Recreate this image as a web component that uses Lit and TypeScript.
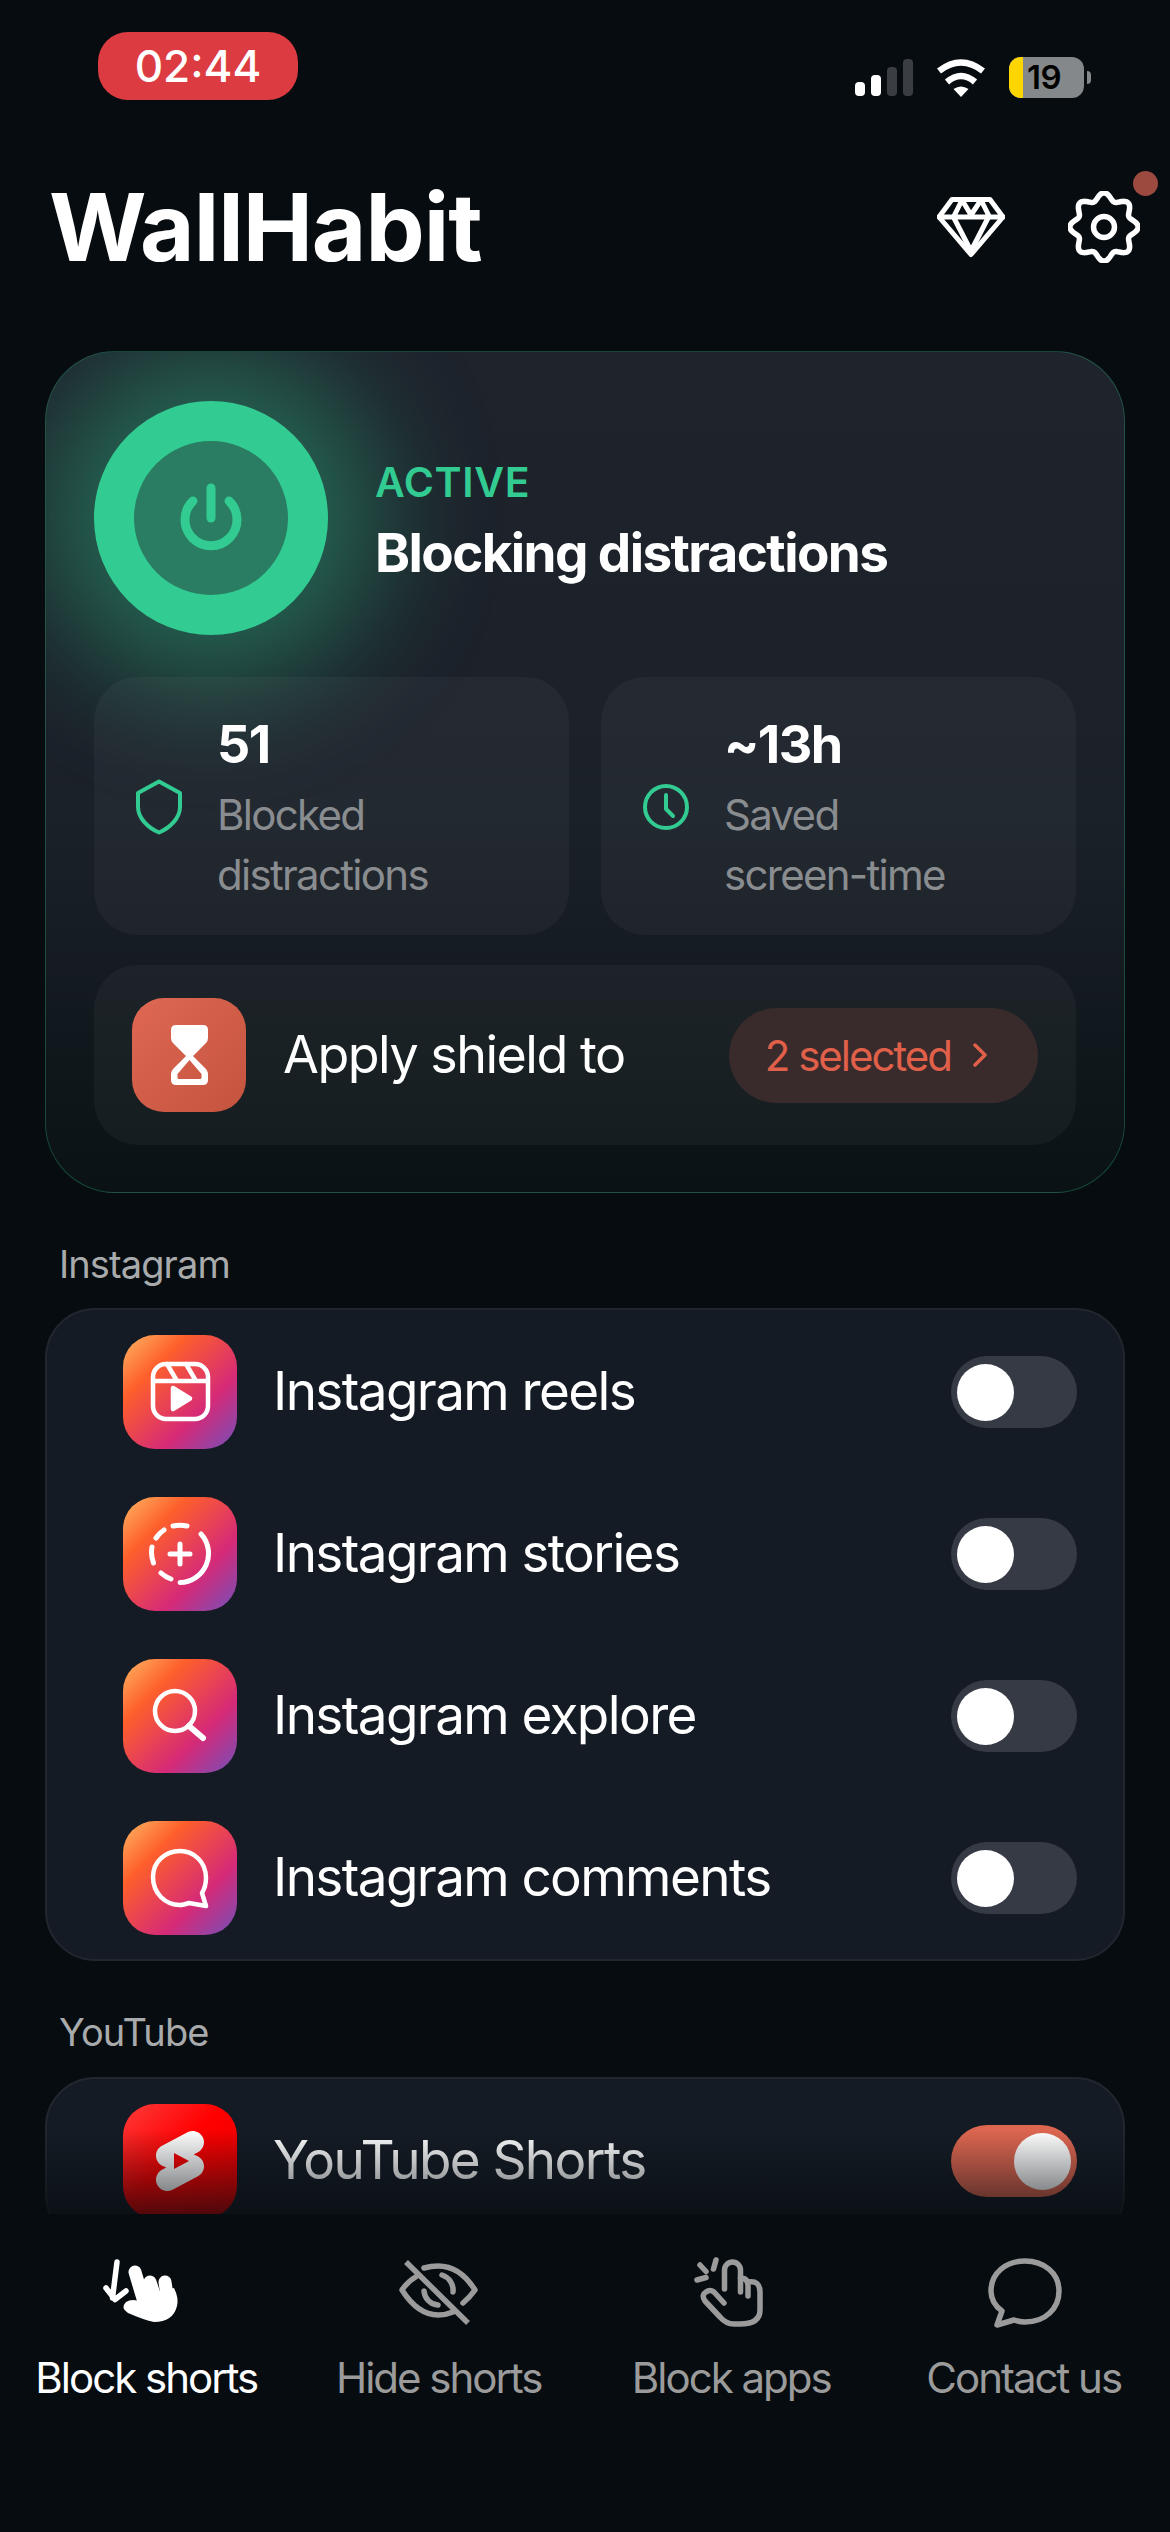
import { LitElement, html, svg, css } from "lit";
import { customElement } from "lit/decorators.js";

// wavy 8 tooth outline, easier to compute than to write by hand
function gearPath(): string {
    const points: string[] = [];
    for (let i = 0; i < 240; i++) {
        const a = (i / 240) * Math.PI * 2;
        const r = 30.5 + 3.6 * Math.cos(8 * a);
        points.push(`${(36 + r * Math.sin(a)).toFixed(2)} ${(36 - r * Math.cos(a)).toFixed(2)}`);
    }
    return `M${points.join("L")}Z`;
}

const reelsIcon = svg`
    <rect x="30" y="29" width="55" height="55" rx="13"/>
    <path d="M30 46H85M44 29L54 46M63 29L73 46"/>
    <path class="fill" d="M50 53L67 63.5L50 74Z"/>`;

const storiesIcon = svg`
    <path stroke-width="5" d="M50 29A29 29 0 0 1 64 29M41 33A29 29 0 0 0 33 41M29 50A29 29 0 0 0 30.500 66M38 76A29 29 0 0 0 48 82M57 85.500A29 29 0 0 0 78 37"/>
    <path stroke-width="5" d="M57 47V67M47 57H67"/>`;

const exploreIcon = svg`
    <circle cx="52" cy="52" r="20"/>
    <path stroke-width="6" d="M66 67L80 79"/>`;

const commentsIcon = svg`
    <path d="M66 82L83 85L79 72C82 67 83 62 83 57C83 41 71 30 57 30C42 30 30 41 30 56C30 72 42 84 57 84C60 84 63 83 66 82Z"/>`;

const shortsIcon = svg`
    <g transform="translate(21 21) scale(3)">
        <path class="fill" stroke="none" d="M17.770 10.320l-1.200-.5L18 9.060c1.840-.96 2.530-3.230 1.560-5.060s-3.240-2.530-5.070-1.560L6 6.940c-1.290.68-2.070 2.040-2 3.490.07 1.420.93 2.670 2.220 3.250.03.01 1.200.5 1.200.5L6 14.930c-1.830.97-2.530 3.240-1.560 5.070.97 1.830 3.240 2.530 5.070 1.560l8.500-4.500c1.290-.68 2.060-2.040 1.990-3.490-.07-1.420-.94-2.680-2.230-3.250zM10 14.650v-5.300L15 12l-5 2.650z"/>
    </g>`;

type Row = { name: string; kind: string; icon: unknown; on: boolean };

const instagramRows: Row[] = [
    { name: "Instagram reels", kind: "ig", icon: reelsIcon, on: false },
    { name: "Instagram stories", kind: "ig", icon: storiesIcon, on: false },
    { name: "Instagram explore", kind: "ig", icon: exploreIcon, on: false },
    { name: "Instagram comments", kind: "ig", icon: commentsIcon, on: false },
];

const youtubeRows: Row[] = [
    { name: "YouTube Shorts", kind: "yt", icon: shortsIcon, on: true },
];

@customElement("app-root")
export class AppRoot extends LitElement {
    static override styles = css`
        :host {
            display: flex;
            flex-direction: column;
            width: 1170px;
            height: 2532px;
            overflow: hidden;
            background: #060c10;
            color: #fff;
            font-family: Inter, "Noto Sans", sans-serif;
        }

        svg {
            display: block;
            flex: none;
        }

        .content {
            position: relative;
            flex: 1;
            min-height: 0;
            overflow: hidden;
        }

        .fade {
            position: absolute;
            left: 0;
            right: 0;
            bottom: 0;
            height: 84px;
            background: linear-gradient(rgba(6, 12, 16, 0), rgba(6, 12, 16, 0.68));
        }

        /* status bar */
        .status {
            display: flex;
            justify-content: space-between;
            align-items: flex-start;
            padding: 32px 79px 0 98px;
        }
        .time {
            width: 200px;
            height: 68px;
            border-radius: 30px;
            background: #dc3c41;
            font-size: 44px;
            font-weight: 500;
            line-height: 68px;
            text-align: center;
        }
        .status-icons {
            display: flex;
            align-items: center;
            margin-top: 25px;
        }
        .signal {
            display: flex;
            align-items: flex-end;
            gap: 6px;
            height: 37px;
            margin-right: 23px;
        }
        .signal i {
            width: 10px;
            border-radius: 4px;
            background: #3a3e42;
        }
        .signal i.lit {
            background: #fff;
        }
        .s1 { height: 14px; }
        .s2 { height: 21px; }
        .s3 { height: 29px; }
        .s4 { height: 37px; }
        .battery {
            position: relative;
            overflow: hidden;
            width: 75px;
            height: 41px;
            margin-left: 23px;
            border-radius: 12px;
            background: #85888a;
            color: #000;
            font-size: 33px;
            font-weight: 600;
            line-height: 41px;
            letter-spacing: -0.5px;
            text-indent: 18px;
        }
        .battery::before {
            content: "";
            position: absolute;
            left: 0;
            top: 0;
            bottom: 0;
            width: 14px;
            background: #ffd500;
        }
        .nub {
            width: 4px;
            height: 13px;
            margin-left: 3px;
            border-radius: 0 6px 6px 0;
            background: #85888a;
        }

        /* header */
        .header {
            display: flex;
            justify-content: space-between;
            align-items: center;
            padding: 77px 30px 74px 49px;
        }
        .title {
            font-size: 94px;
            font-weight: 700;
            line-height: 100px;
            letter-spacing: -1px;
        }
        .actions {
            display: flex;
            align-items: center;
            gap: 63px;
        }
        .settings {
            position: relative;
        }
        .dot {
            position: absolute;
            top: -20px;
            right: -18px;
            width: 25px;
            height: 25px;
            border-radius: 50%;
            background: #9c4a40;
        }

        /* hero card */
        .hero {
            box-sizing: border-box;
            overflow: hidden;
            margin: 0 45px;
            padding: 49px 48px 47px;
            border: 1.5px solid rgba(50, 203, 146, 0.28);
            border-radius: 70px;
            background: linear-gradient(#1e232c, #1b2129 55%, #0a1215);
        }
        .state {
            display: flex;
            align-items: center;
            gap: 47px;
            margin-bottom: 42px;
        }
        .power {
            display: flex;
            align-items: center;
            justify-content: center;
            box-sizing: border-box;
            width: 234px;
            height: 234px;
            border: 40px solid #32cb92;
            border-radius: 50%;
            background: #2a7c62;
            box-shadow: 0 0 120px 50px rgba(50, 203, 146, 0.42);
        }
        .state-text {
            padding-top: 6px;
        }
        .state-label {
            color: #32cb92;
            font-size: 41px;
            font-weight: 600;
            line-height: 50px;
            letter-spacing: 0.6px;
        }
        .state-title {
            margin-top: 14px;
            font-size: 53px;
            font-weight: 700;
            line-height: 64px;
            letter-spacing: -1.6px;
        }
        .stats {
            display: grid;
            grid-template-columns: 1fr 1fr;
            gap: 32px;
            margin-bottom: 30px;
        }
        .stat {
            display: flex;
            align-items: center;
            gap: 35px;
            padding: 37px 42px 30px;
            border-radius: 44px;
            background: rgba(255, 255, 255, 0.04);
        }
        .stat svg {
            margin-top: -6px;
        }
        .stat-value {
            margin-bottom: 9px;
            font-size: 52px;
            font-weight: 700;
            line-height: 62px;
            letter-spacing: -1.5px;
        }
        .stat-label {
            color: #8a8d90;
            font-size: 42px;
            line-height: 60px;
            letter-spacing: -1.7px;
        }
        .apply {
            display: flex;
            align-items: center;
            height: 180px;
            padding: 0 38px;
            border-radius: 44px;
            background: rgba(255, 255, 255, 0.04);
        }
        .apply-icon {
            display: flex;
            align-items: center;
            justify-content: center;
            width: 114px;
            height: 114px;
            margin-right: 37px;
            border-radius: 32px;
            background: linear-gradient(135deg, #de6853, #c4533d);
        }
        .apply-text {
            flex: 1;
            font-size: 52px;
            line-height: 64px;
            letter-spacing: -1.5px;
        }
        .pill {
            display: flex;
            align-items: center;
            gap: 22px;
            height: 95px;
            padding: 0 51px 0 36px;
            border-radius: 48px;
            background: #392a2b;
            color: #e0604a;
            font-size: 42px;
            letter-spacing: -2px;
        }

        /* toggle sections */
        .section-label {
            margin: 48px 59px 21px;
            color: #a8aaac;
            font-size: 38px;
            line-height: 46px;
            letter-spacing: -0.9px;
        }
        .section-label.next {
            margin-top: 48px;
            margin-bottom: 22px;
        }
        .list {
            display: flex;
            flex-direction: column;
            gap: 48px;
            margin: 0 45px;
            padding: 25px 46px 24px 76px;
            border: 2px solid #22272f;
            border-radius: 50px;
            background: #151b24;
        }
        .row {
            display: flex;
            align-items: center;
            height: 114px;
        }
        .app-icon {
            width: 114px;
            height: 114px;
            margin-right: 36px;
            border-radius: 32px;
        }
        .app-icon svg {
            fill: none;
            stroke: #fff;
            stroke-width: 4.500;
            stroke-linecap: round;
            stroke-linejoin: round;
        }
        .app-icon .fill {
            fill: #fff;
        }
        .ig {
            background: linear-gradient(135deg, #fdb763 0%, #fe5f2b 28%, #d52a78 68%, #7350bb 100%);
        }
        .yt {
            background: linear-gradient(135deg, #ff3b3b 0%, #ff0000 45%, #e00000 100%);
        }
        .row-name {
            flex: 1;
            padding-bottom: 3px;
            font-size: 53px;
            line-height: 64px;
            letter-spacing: -1.600px;
        }
        .toggle {
            display: flex;
            align-items: center;
            box-sizing: border-box;
            width: 126px;
            height: 72px;
            padding: 0 6px;
            border-radius: 36px;
            background: #363a45;
        }
        .toggle.on {
            justify-content: flex-end;
            background: #dd6650;
        }
        .knob {
            width: 57px;
            height: 57px;
            border-radius: 50%;
            background: #fff;
        }

        /* bottom tabs */
        .tabs {
            flex: none;
            display: grid;
            grid-template-columns: repeat(4, 1fr);
            height: 318px;
            padding-top: 41px;
            box-sizing: border-box;
            background: #060c10;
        }
        .tab {
            display: flex;
            flex-direction: column;
            align-items: center;
            gap: 15px;
            color: #9b9b9b;
            font-size: 42px;
            line-height: 56px;
            letter-spacing: -2px;
            white-space: nowrap;
        }
        .tab.active {
            color: #fff;
        }
        .tab svg {
            fill: none;
            stroke: currentColor;
            stroke-width: 5.500;
            stroke-linecap: round;
            stroke-linejoin: round;
        }
    `;

    private renderRow(row: Row) {
        return html`
            <div class="row">
                <div class="app-icon ${row.kind}">
                    <svg width="114" height="114" viewBox="0 0 114 114">${row.icon}</svg>
                </div>
                <div class="row-name">${row.name}</div>
                <div class="toggle ${row.on ? "on" : ""}"><div class="knob"></div></div>
            </div>
        `;
    }

    private renderStatus() {
        return html`
            <div class="status">
                <div class="time">02:44</div>
                <div class="status-icons">
                    <div class="signal">
                        <i class="s1 lit"></i><i class="s2 lit"></i><i class="s3"></i><i class="s4"></i>
                    </div>
                    <svg width="50" height="38" viewBox="0 0 50 38" fill="none" stroke="#fff" stroke-width="6.500">
                        <path d="M3 12Q25 -5 47 12"/>
                        <path d="M11 23Q25 11 39 23"/>
                        <path fill="#fff" stroke="none" d="M17.500 30Q25 25 32.500 30L25 38Z"/>
                    </svg>
                    <div class="battery">19</div>
                    <div class="nub"></div>
                </div>
            </div>
        `;
    }

    private renderHeader() {
        return html`
            <div class="header">
                <div class="title">WallHabit</div>
                <div class="actions">
                    <svg width="68" height="62" viewBox="118 154 68 60" fill="none" stroke="#fff" stroke-width="5" stroke-linejoin="round" stroke-linecap="round">
                        <path d="M133 156.500H171L184 174L152 211.500L120 174Z"/>
                        <path d="M120 174H184M135 175L152 208L169 175M143 157L135 173M143 157L152 172L162 157L170 173"/>
                    </svg>
                    <div class="settings">
                        <svg width="72" height="72" viewBox="0 0 72 72" fill="none" stroke="#fff" stroke-width="5.500">
                            <path d="${gearPath()}"/>
                            <circle cx="36" cy="36" r="10.500"/>
                        </svg>
                        <div class="dot"></div>
                    </div>
                </div>
            </div>
        `;
    }

    private renderHero() {
        return html`
            <div class="hero">
                <div class="state">
                    <div class="power">
                        <svg width="64" height="70" viewBox="0 0 64 70" fill="none" stroke="#32cb92" stroke-width="9" stroke-linecap="round">
                            <path d="M32 5V35"/>
                            <path d="M14 18A26 26 0 1 0 50 18"/>
                        </svg>
                    </div>
                    <div class="state-text">
                        <div class="state-label">ACTIVE</div>
                        <div class="state-title">Blocking distractions</div>
                    </div>
                </div>
                <div class="stats">
                    <div class="stat">
                        <svg width="46" height="56" viewBox="0 0 46 56" fill="none" stroke="#32cb92" stroke-width="4">
                            <path d="M23 2.500L44 14V28C44 39 34 49 23 53.500C12 49 2 39 2 28V14Z" stroke-linejoin="round"/>
                        </svg>
                        <div>
                            <div class="stat-value">51</div>
                            <div class="stat-label">Blocked<br />distractions</div>
                        </div>
                    </div>
                    <div class="stat">
                        <svg width="46" height="48" viewBox="0 0 46 48" fill="none" stroke="#32cb92" stroke-width="4" stroke-linecap="round" stroke-linejoin="round">
                            <circle cx="23" cy="24" r="21"/>
                            <path d="M23 12V26L30 33"/>
                        </svg>
                        <div>
                            <div class="stat-value">~13h</div>
                            <div class="stat-label">Saved<br />screen-time</div>
                        </div>
                    </div>
                </div>
                <div class="apply">
                    <div class="apply-icon">
                        <svg width="37" height="60" viewBox="0 0 37 60">
                            <path fill="#fff" fill-rule="evenodd" d="M5 0H32Q37 0 37 5V13Q37 16 35 18L22 31L35 44Q37 47 37 49V55Q37 60 32 60H5Q0 60 0 55V49Q0 47 2 44L15 31L2 18Q0 16 0 13V5Q0 0 5 0ZM18.500 35L6.500 49V53Q6.500 54 8 54H29Q30.500 54 30.500 53V49Z"/>
                        </svg>
                    </div>
                    <div class="apply-text">Apply shield to</div>
                    <div class="pill">
                        2 selected
                        <svg width="14" height="24" viewBox="0 0 14 24" fill="none" stroke="#e0604a" stroke-width="3.500" stroke-linecap="round" stroke-linejoin="round">
                            <path d="M2 2L12 12L2 22"/>
                        </svg>
                    </div>
                </div>
            </div>
        `;
    }

    private renderTabs() {
        return html`
            <div class="tabs">
                <div class="tab active">
                    <svg width="100" height="80" viewBox="36 45 100 80">
                        <path d="M57 52L52.500 88M46 78L55 89.500L66 81"/>
                        <g stroke-width="13">
                            <path d="M75 62L84 92"/>
                            <path d="M90 72L96 90"/>
                            <path d="M105 72L108 92"/>
                        </g>
                        <path fill="#fff" stroke="none" d="M78 85L114 78Q119 88 117 96Q113 112 94 112Q84 110 68 103Q60 98 66 92Q72 88 82 92Z"/>
                    </svg>
                    Block shorts
                </div>
                <div class="tab">
                    <svg width="100" height="80" viewBox="329 45 100 80">
                        <path d="M357 66Q347 72 342 80Q358 105 378 105Q386 105 393 102"/>
                        <path d="M364 58Q371 56 378 56Q400 56 415 80Q410 87 403 93"/>
                        <path d="M382 65A16 16 0 0 1 393 82M364 81A15 15 0 0 0 378 95"/>
                        <path stroke-linecap="butt" d="M346 52L408 113"/>
                    </svg>
                    Hide shorts
                </div>
                <div class="tab">
                    <svg width="100" height="80" viewBox="21 35 100 80">
                        <path d="M64.500 69V50a8 8 0 0 1 16 0V72"/>
                        <path d="M80.500 58q7.500 0 7.500 8V76"/>
                        <path d="M88 62q12-2 12 10V90q0 14-20 14H74q-8 0-14-7L45 81q-4-6 1-9q4-3 8 0L64 83"/>
                        <path d="M40 45L46 51.500M56 40L53.500 49M37 60L46 57.500"/>
                    </svg>
                    Block apps
                </div>
                <div class="tab">
                    <svg width="100" height="80" viewBox="313 35 100 80">
                        <path d="M353 100Q358 102 364 102C385 102 398 88 398 71C398 53 383 41 364 41C345 41 330 53 330 71C330 79 334 86 341 91L336 105Z"/>
                    </svg>
                    Contact us
                </div>
            </div>
        `;
    }

    override render() {
        return html`
            <div class="content">
                ${this.renderStatus()}
                ${this.renderHeader()}
                ${this.renderHero()}
                <div class="section-label">Instagram</div>
                <div class="list">${instagramRows.map((r) => this.renderRow(r))}</div>
                <div class="section-label next">YouTube</div>
                <div class="list">${youtubeRows.map((r) => this.renderRow(r))}</div>
                <div class="fade"></div>
            </div>
            ${this.renderTabs()}
        `;
    }
}
